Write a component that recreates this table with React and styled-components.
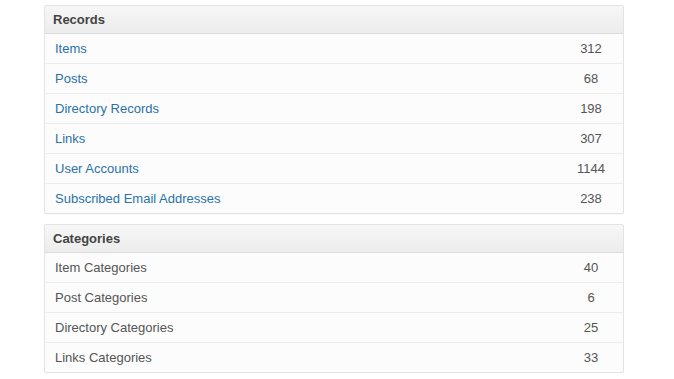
import styled, { createGlobalStyle } from "styled-components";

const GlobalStyle = createGlobalStyle`
  body {
    margin: 0;
    background: #fff;
    font-family: "Liberation Sans", Arial, sans-serif;
    font-size: 13px;
  }
`;

const records = [
  { label: "Items", count: 312 },
  { label: "Posts", count: 68 },
  { label: "Directory Records", count: 198 },
  { label: "Links", count: 307 },
  { label: "User Accounts", count: 1144 },
  { label: "Subscribed Email Addresses", count: 238 },
];

const categories = [
  { label: "Item Categories", count: 40 },
  { label: "Post Categories", count: 6 },
  { label: "Directory Categories", count: 25 },
  { label: "Links Categories", count: 33 },
];

function StatsPanel({ title, rows, linked }) {
  return (
    <Panel>
      <Heading>{title}</Heading>
      {rows.map((row) => (
        <Row key={row.label}>
          <Label $linked={linked}>{row.label}</Label>
          <Count>{row.count}</Count>
        </Row>
      ))}
    </Panel>
  );
}

export default function App() {
  return (
    <>
      <GlobalStyle />
      <Page>
        <StatsPanel title="Records" rows={records} linked />
        <StatsPanel title="Categories" rows={categories} />
      </Page>
    </>
  );
}

const Page = styled.div`
  display: flex;
  flex-direction: column;
  gap: 10px;
  width: 580px;
  padding: 5px 0 0 44px;
`;

const Panel = styled.div`
  border: 1px solid #e3e3e3;
  border-radius: 2px;
  background: #fcfcfc;
  box-shadow: 0 1px 1px rgba(0, 0, 0, 0.03);
`;

const Heading = styled.div`
  height: 27px;
  line-height: 28px;
  padding: 0 8px;
  font-weight: bold;
  color: #444;
  background: linear-gradient(to bottom, #f7f7f7, #ececec);
  border-bottom: 1px solid #dcdcdc;
`;

const Row = styled.div`
  display: flex;
  align-items: center;
  height: 29px;
  padding-left: 10px;
  & + & {
    border-top: 1px solid #ececec;
  }
`;

const Label = styled.span`
  flex: 1;
  color: ${(p) => (p.$linked ? "#2a72a8" : "#555")};
`;

const Count = styled.span`
  width: 64px;
  text-align: center;
  color: #555;
`;
